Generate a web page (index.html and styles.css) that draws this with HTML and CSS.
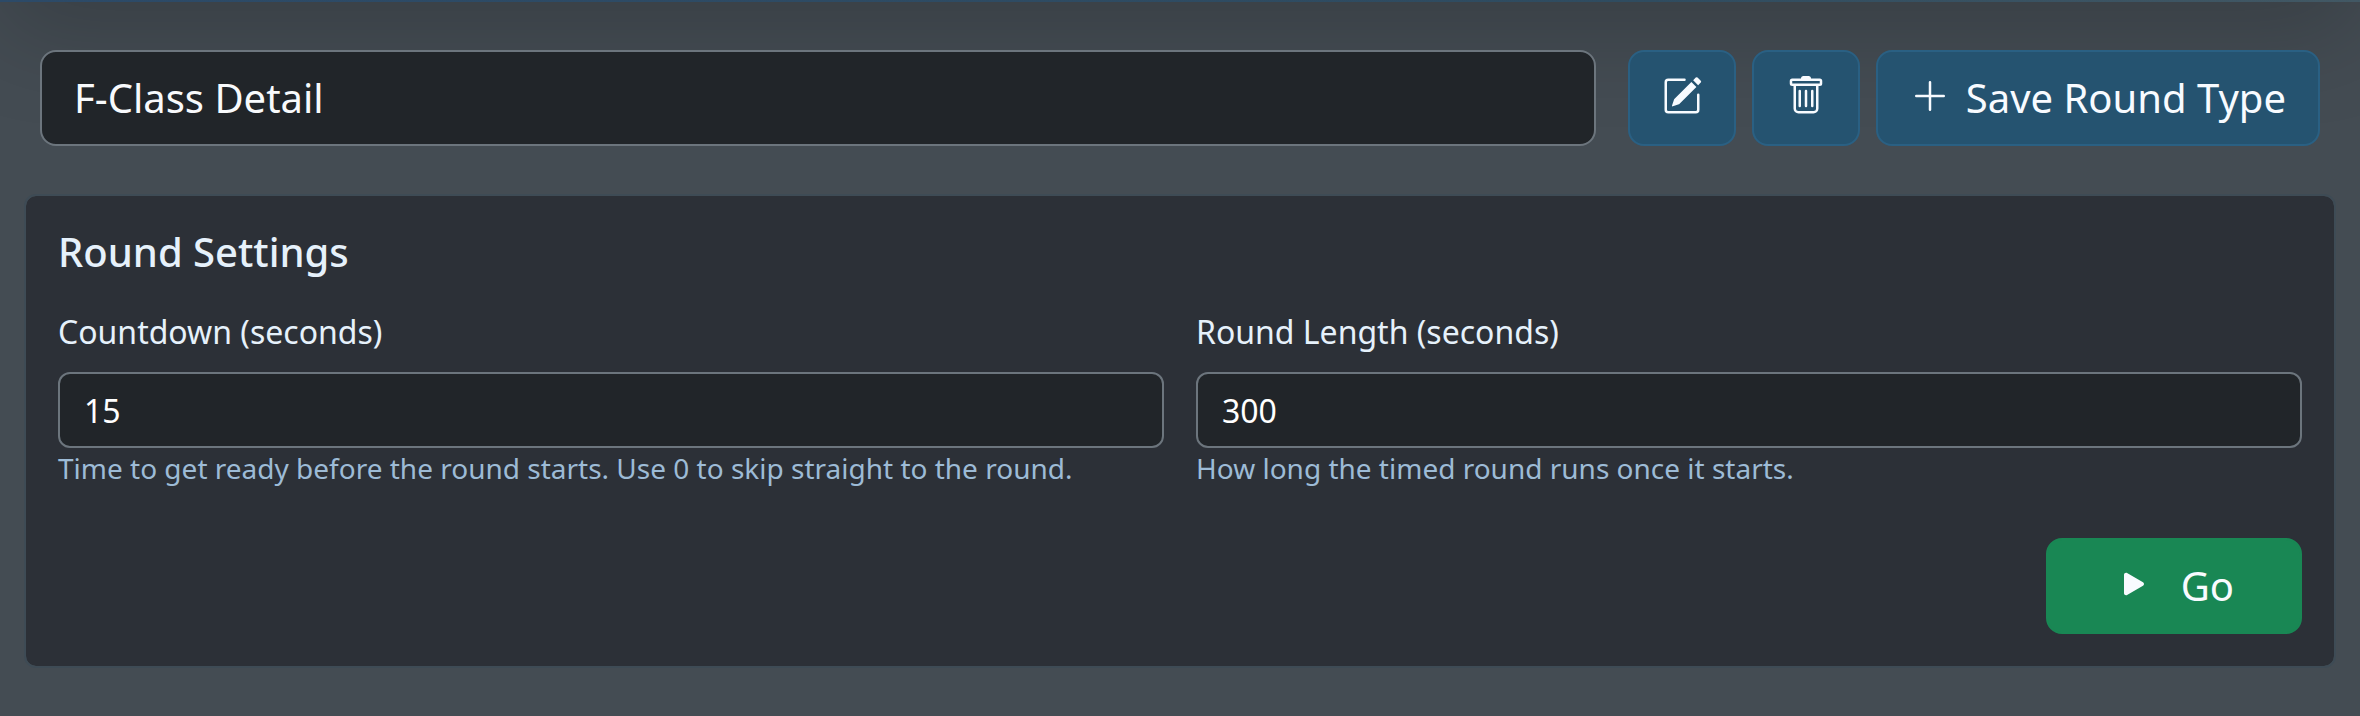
FILE: index.html
```html
<!DOCTYPE html>
<html lang="en">

<head>
    <meta charset="UTF-8">
    <meta name="viewport" content="width=device-width, initial-scale=1.0">
    <title>F-Class Detail</title>
    <link rel="stylesheet" href="styles.css">
</head>

<body>
    <div class="navbar"></div>
    <main>
        <div class="toolbar">
            <input class="round-name" type="text" value="F-Class Detail" aria-label="Round type name">
            <div class="actions">
                <button class="btn" type="button" aria-label="Rename">
                    <svg class="icon" viewBox="0 0 16 16">
                        <path d="M15.502 1.94a.5.5 0 0 1 0 .706L14.459 3.69l-2-2L13.502.646a.5.5 0 0 1 .707 0l1.293 1.293zm-1.75 2.456-2-2L4.939 9.21a.5.5 0 0 0-.121.196l-.805 2.414a.25.25 0 0 0 .316.316l2.414-.805a.5.5 0 0 0 .196-.12l6.813-6.814z"/>
                        <path fill-rule="evenodd" d="M1 13.5A1.5 1.5 0 0 0 2.5 15h11a1.5 1.5 0 0 0 1.5-1.5v-6a.5.5 0 0 0-1 0v6a.5.5 0 0 1-.5.5h-11a.5.5 0 0 1-.5-.5v-11a.5.5 0 0 1 .5-.5H9a.5.5 0 0 0 0-1H2.5A1.5 1.5 0 0 0 1 2.5z"/>
                    </svg>
                </button>
                <button class="btn" type="button" aria-label="Delete">
                    <svg class="icon" viewBox="0 0 16 16">
                        <path d="M5.5 5.5A.5.5 0 0 1 6 6v6a.5.5 0 0 1-1 0V6a.5.5 0 0 1 .5-.5m2.5 0a.5.5 0 0 1 .5.5v6a.5.5 0 0 1-1 0V6a.5.5 0 0 1 .5-.5m3 .5a.5.5 0 0 0-1 0v6a.5.5 0 0 0 1 0z"/>
                        <path d="M14.5 3a1 1 0 0 1-1 1H13v9a2 2 0 0 1-2 2H5a2 2 0 0 1-2-2V4h-.5a1 1 0 0 1-1-1V2a1 1 0 0 1 1-1H6a1 1 0 0 1 1-1h2a1 1 0 0 1 1 1h3.5a1 1 0 0 1 1 1zM4.118 4 4 4.059V13a1 1 0 0 0 1 1h6a1 1 0 0 0 1-1V4.059L11.882 4zM2.5 3h11V2h-11z"/>
                    </svg>
                </button>
                <button class="btn" type="button">
                    <svg class="icon" viewBox="0 0 16 16">
                        <path fill-rule="evenodd" d="M8 2a.5.5 0 0 1 .5.5v5h5a.5.5 0 0 1 0 1h-5v5a.5.5 0 0 1-1 0v-5h-5a.5.5 0 0 1 0-1h5v-5A.5.5 0 0 1 8 2"/>
                    </svg>
                    <span>Save Round Type</span>
                </button>
            </div>
        </div>

        <form class="card">
            <h2>Round Settings</h2>
            <div class="fields">
                <div class="field">
                    <label for="countdown">Countdown (seconds)</label>
                    <input id="countdown" type="text" inputmode="numeric" value="15">
                    <small>Time to get ready before the round starts. Use 0 to skip straight to the round.</small>
                </div>
                <div class="field">
                    <label for="length">Round Length (seconds)</label>
                    <input id="length" type="text" inputmode="numeric" value="300">
                    <small>How long the timed round runs once it starts.</small>
                </div>
            </div>
            <div class="footer">
                <button class="btn go" type="button">
                    <svg class="icon" viewBox="0 0 16 16">
                        <path d="m11.596 8.697-6.363 3.692c-.54.313-1.233-.066-1.233-.697V4.308c0-.63.692-1.01 1.233-.696l6.363 3.692a.802.802 0 0 1 0 1.393"/>
                    </svg>
                    <span>Go</span>
                </button>
            </div>
        </form>
    </main>
</body>

</html>
```

FILE: styles.css
```css
* {
    box-sizing: border-box;
}
body {
    margin: 0;
    background-color: #444c53;
    color: #e6f1fb;
    font-family: "Noto Sans", sans-serif;
    font-size: 32px;
    line-height: 48px;
}
/* only the bottom edge and the shadow of the bar are in view */
.navbar {
    height: 200px;
    margin-top: -198px;
    background: linear-gradient(to right, #2c4a68, #2f4c60 70%, #425864);
    box-shadow: 0 32px 96px rgba(0, 0, 0, 0.175);
}
main {
    position: relative;
    padding: 48px 24px;
}
.toolbar {
    display: flex;
    gap: 32px;
    padding: 0 16px;
    margin-bottom: 48px;
}
.actions {
    display: flex;
    gap: 16px;
}
input {
    width: 100%;
    height: 76px;
    padding: 0 24px;
    background-color: #212529;
    border: 2px solid #6c757d;
    border-radius: 12px;
    color: #fff;
    font: inherit;
}
.round-name {
    flex: 1;
    height: 96px;
    padding: 0 32px 2px;
    border-radius: 16px;
    color: #f8fafc;
    font-size: 40px;
}
.btn {
    padding: 16px 32px;
    background-color: #255370;
    border: 2px solid #2a6083;
    border-radius: 16px;
    color: #f8fbff;
    font: inherit;
    font-size: 40px;
    line-height: 60px;
    white-space: nowrap;
    cursor: pointer;
}
.btn:hover {
    background-color: #2a6083;
}
.icon {
    width: 40px;
    height: 40px;
    vertical-align: -3px;
    fill: currentColor;
}
.btn span {
    margin-left: 5px;
}
.card {
    padding: 32px;
    background-color: #2c3037;
    background-clip: padding-box;
    border: 2px solid #3e4b55;
    border-radius: 12px;
}
h2 {
    margin: 0 0 32px;
    font-size: 40px;
    font-weight: 500;
    line-height: 48px;
}
.fields {
    display: grid;
    grid-template-columns: 1fr 1fr;
    gap: 32px;
}
label {
    display: block;
    margin-bottom: 16px;
}
small {
    display: block;
    color: #9dbbd6;
    font-size: 28px;
    line-height: 40px;
}
.footer {
    display: flex;
    justify-content: flex-end;
    margin-top: 50px;
}
.go {
    padding: 16px 66px;
    background-color: #198754;
    border-color: #198754;
}
.go:hover {
    background-color: #157347;
}
.go span {
    margin-left: 16px;
}
```
